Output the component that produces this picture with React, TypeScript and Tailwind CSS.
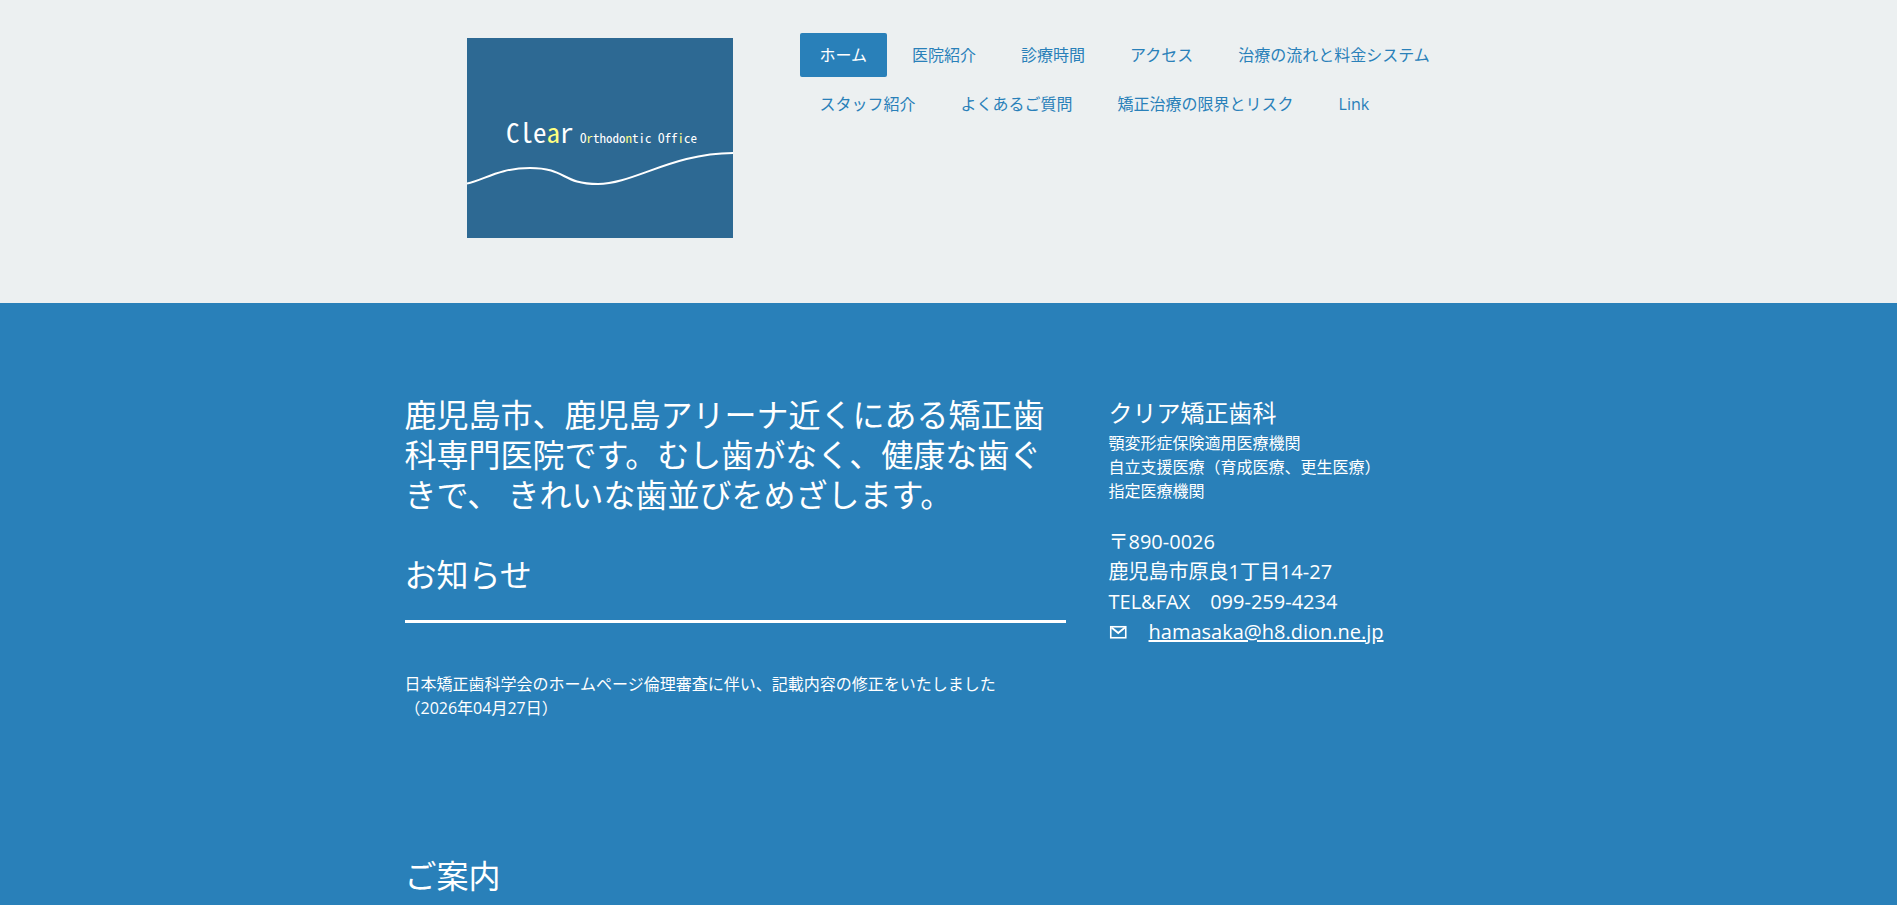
const navItems = [
  'ホーム',
  '医院紹介',
  '診療時間',
  'アクセス',
  '治療の流れと料金システム',
  'スタッフ紹介',
  'よくあるご質問',
  '矯正治療の限界とリスク',
  'Link',
];

function Logo() {
  return (
    <svg viewBox="0 0 266 200" className="block h-auto w-full" role="img" aria-label="Clear Orthodontic Office">
      <rect width="266" height="200" fill="#2d6993" />
      <g fill="#fff" className="font-['Noto_Sans_Mono_CJK_JP','Liberation_Mono',monospace]">
        <text x="39" y="105" fontSize="27">
          Cle<tspan fill="#ffff80">a</tspan>r
        </text>
        <text x="113" y="105" fontSize="13">
          O<tspan fill="#ffff80">r</tspan>thodo<tspan fill="#ffff80">n</tspan>tic Off<tspan fill="#ffff80">i</tspan>ce
        </text>
      </g>
      <path
        d="M0 145.5C17 142 32 130 63 130C100 130 94 146 131 146C166 146 206 115 266 115"
        fill="none"
        stroke="#fff"
        strokeWidth="2"
      />
    </svg>
  );
}

function Header() {
  return (
    <header className="bg-[#ecf0f1] pt-[33px] pb-[65px]">
      <div className="mx-auto flex max-w-[1088px] items-start">
        <a href="#" className="mt-[5px] mr-[67px] ml-[62px] w-[266px] shrink-0">
          <Logo />
        </a>
        <nav className="min-w-0 flex-1">
          <ul className="flex flex-wrap gap-[5px]">
            {navItems.map((item, i) => (
              <li key={item}>
                <a
                  href="#"
                  aria-current={i === 0 ? 'page' : undefined}
                  className={
                    i === 0
                      ? 'block rounded-xs bg-[#2980b9] px-5 py-2.5 text-base leading-6 text-white'
                      : 'block rounded-xs px-5 py-2.5 text-base leading-6 text-[#2980b9]'
                  }
                >
                  {item}
                </a>
              </li>
            ))}
          </ul>
        </nav>
      </div>
    </header>
  );
}

function MailIcon() {
  return (
    <svg viewBox="0 0 20 20" className="h-5 w-5 shrink-0" fill="none" stroke="currentColor" aria-hidden="true">
      <rect x="1.75" y="4.75" width="15" height="11" strokeWidth="1.6" />
      <path d="M2.5 5.5L9.25 11L16 5.5" strokeWidth="1.8" />
    </svg>
  );
}

export default function App() {
  return (
    <div className="min-h-screen bg-[#2980b9] font-['Open_Sans','Noto_Sans_CJK_JP',sans-serif]" lang="ja">
      <Header />
      <div className="mx-auto grid max-w-[1088px] grid-cols-[minmax(0,661fr)_minmax(0,384fr)] gap-x-[43px] pt-[92px] text-white">
        <main>
          <h1 className="text-[32px] leading-10">
            鹿児島市、鹿児島アリーナ近くにある矯正歯科専門医院です。むし歯がなく、健康な歯ぐきで、 きれいな歯並びをめざします。
          </h1>
          <h2 className="mt-10 text-[32px] leading-10">お知らせ</h2>
          <hr className="mt-[25px] border-t-3 border-white" />
          <p className="mt-[49px] text-base leading-6">
            日本矯正歯科学会のホームページ倫理審査に伴い、記載内容の修正をいたしました
            <br />
            （2026年04月27日）
          </p>
          <h2 className="mt-[136px] text-[32px] leading-10">ご案内</h2>
        </main>
        <aside>
          <h2 className="text-2xl leading-9">クリア矯正歯科</h2>
          <p className="text-base leading-6">
            顎変形症保険適用医療機関
            <br />
            自立支援医療（育成医療、更生医療）
            <br />
            指定医療機関
          </p>
          <address className="mt-6 text-xl leading-[30px] not-italic">
            <p>〒890-0026</p>
            <p>鹿児島市原良1丁目14-27</p>
            <p>TEL&amp;FAX　099-259-4234</p>
            <p className="flex items-center gap-5">
              <MailIcon />
              <a href="mailto:hamasaka@h8.dion.ne.jp" className="underline">
                hamasaka@h8.dion.ne.jp
              </a>
            </p>
          </address>
        </aside>
      </div>
    </div>
  );
}
